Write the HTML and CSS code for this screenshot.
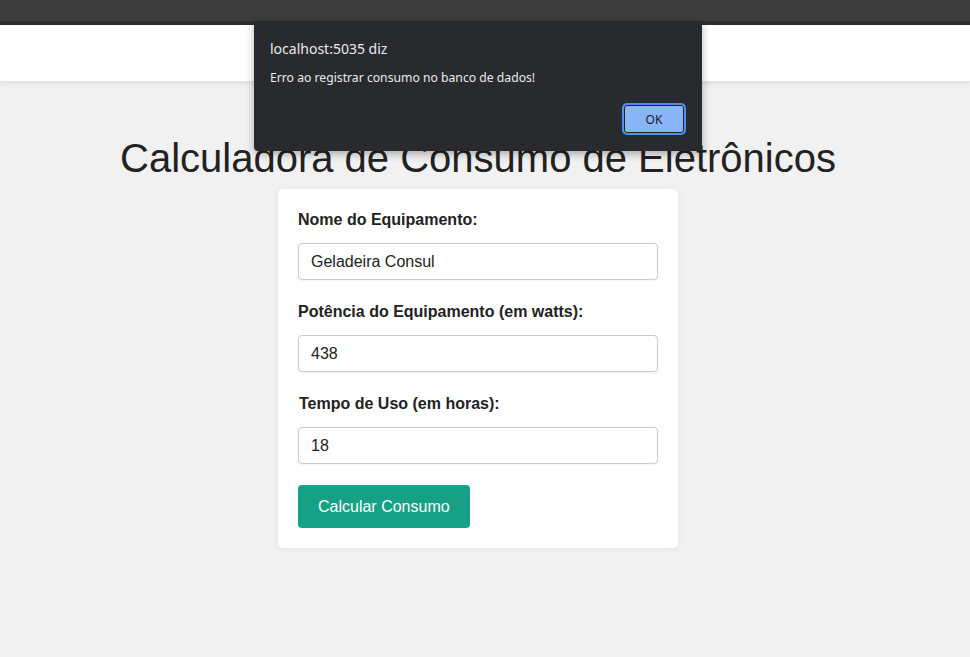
FILE: index.html
```html
<!DOCTYPE html>
<html lang="pt-BR">
<head>
<meta charset="utf-8">
<title>Calculadora de Consumo de Eletrônicos</title>
<link rel="stylesheet" href="styles.css">
</head>
<body>
<div class="chrome-bar"></div>
<header class="site-header"></header>
<main class="page">
  <h1 class="title">Calculadora de Consumo de Eletrônicos</h1>
  <form class="card">
    <label class="field-label" for="nome">Nome do Equipamento:</label>
    <input class="field-input" id="nome" type="text" value="Geladeira Consul">
    <label class="field-label" for="potencia">Potência do Equipamento (em watts):</label>
    <input class="field-input" id="potencia" type="text" value="438">
    <label class="field-label shifted" for="tempo">Tempo de Uso (em horas):</label>
    <input class="field-input last" id="tempo" type="text" value="18">
    <button class="btn" type="button">Calcular Consumo</button>
  </form>
</main>
<div class="dialog">
  <div class="dialog-title">localhost:5035 diz</div>
  <div class="dialog-msg">Erro ao registrar consumo no banco de dados!</div>
  <div class="dialog-actions">
    <button class="dialog-ok" type="button">OK</button>
  </div>
</div>
</body>
</html>
```
FILE: styles.css
```css
* { box-sizing: border-box; }
html, body { margin: 0; padding: 0; }
body {
  background: #f1f1f1;
  font-family: "Liberation Sans", Arial, sans-serif;
  color: #222;
  min-height: 657px;
  position: relative;
}
.chrome-bar {
  height: 25px;
  background: #3c3c3c;
  border-bottom: 4px solid #2f2f2f;
}
.site-header {
  height: 57px;
  background: #fff;
  box-shadow: 0 2px 5px rgba(0,0,0,0.08);
  border-bottom: 1px solid #e4e4e4;
}
.page {
  width: 956px;
  display: flex;
  flex-direction: column;
  align-items: center;
}
.title {
  margin: 53px 0 8px;
  font-size: 40px;
  font-weight: normal;
  line-height: 46px;
  color: #222;
}
.card {
  width: 400px;
  background: #fff;
  border-radius: 5px;
  padding: 21px 20px 20px;
  box-shadow: 0 0 8px rgba(0,0,0,0.06);
  display: flex;
  flex-direction: column;
  align-items: flex-start;
}
.field-label {
  font-weight: bold;
  font-size: 16px;
  line-height: 20px;
  margin-bottom: 13px;
}
.field-label.shifted { margin-left: 1px; }
.field-input {
  width: 100%;
  height: 37px;
  border: 1px solid #ccc;
  border-radius: 4px;
  padding: 0 12px;
  font-family: "Liberation Sans", Arial, sans-serif;
  font-size: 16px;
  color: #222;
  background: #fff;
  box-shadow: 0 1px 2px rgba(0,0,0,0.06);
  margin-bottom: 22px;
}
.field-input.last { margin-bottom: 21px; }
.btn {
  height: 43px;
  padding: 0 20px;
  background: #16a085;
  color: #fff;
  border: none;
  border-radius: 4px;
  font-family: "Liberation Sans", Arial, sans-serif;
  font-size: 16px;
}
.dialog {
  position: absolute;
  left: 254px;
  top: 21px;
  width: 448px;
  height: 130px;
  background: #292a2d;
  border-radius: 0 0 4px 4px;
  box-shadow: 0 3px 8px rgba(0,0,0,0.3);
  padding: 19px 16px 0;
  font-family: "Noto Sans", "Open Sans", sans-serif;
  color: #e8eaed;
}
.dialog-title {
  font-size: 14px;
  line-height: 18px;
}
.dialog-msg {
  font-size: 12.2px;
  line-height: 16px;
  margin-top: 12px;
}
.dialog-actions {
  display: flex;
  justify-content: flex-end;
  margin-top: 17px;
}
.dialog-ok {
  width: 64px;
  height: 32px;
  background: #8ab4f8;
  border: 2px solid #4e8ff2;
  box-shadow: inset 0 0 0 1px #202124;
  border-radius: 5px;
  color: #202124;
  font-family: "Noto Sans", "Open Sans", sans-serif;
  font-size: 12px;
  padding: 0;
}
```
